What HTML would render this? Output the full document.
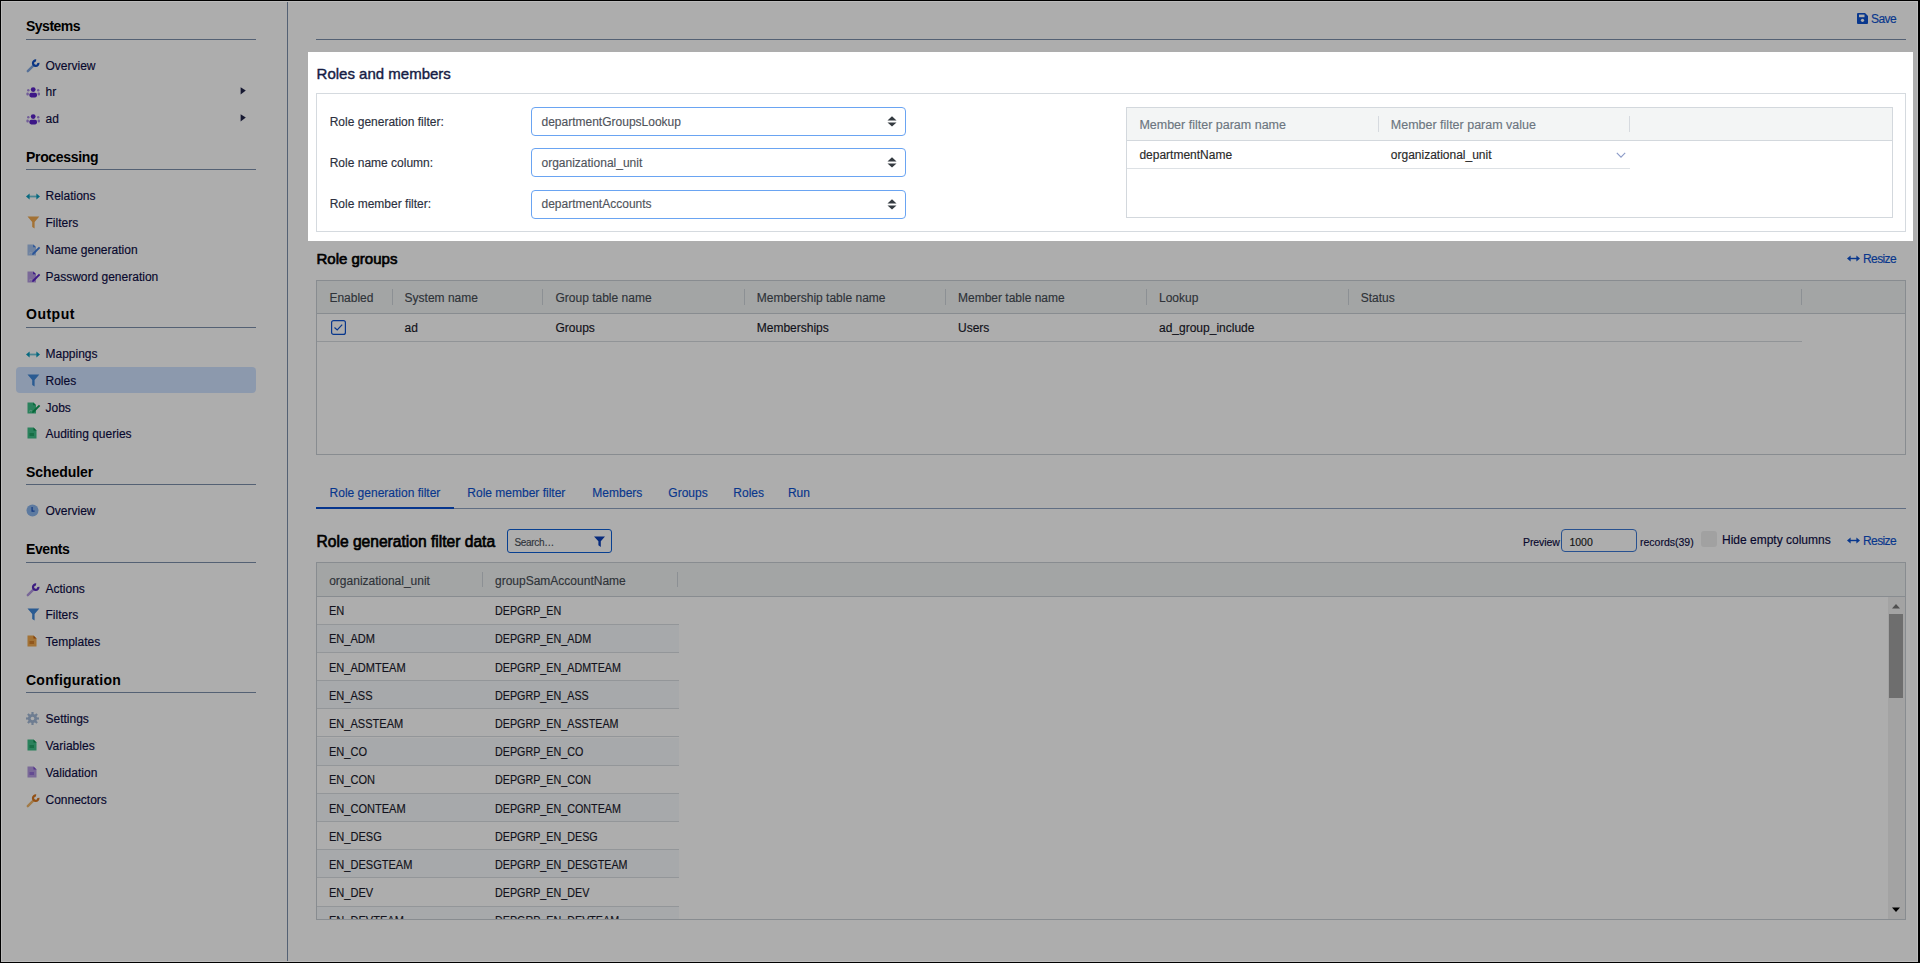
<!DOCTYPE html>
<html><head><meta charset="utf-8"><title>Roles</title>
<style>
html,body{margin:0;padding:0}
body{width:1920px;height:963px;overflow:hidden;position:relative;background:#fff;font-family:"Liberation Sans",sans-serif}
.t{position:absolute;white-space:nowrap;line-height:1;-webkit-text-stroke:0.15px}
.r{position:absolute;display:block}
#ov{position:absolute;left:0;top:0;width:1920px;height:963px;background:rgba(0,0,0,0.32)}
</style></head><body>
<div id="main">
<div class="r" style="left:287px;top:0px;width:1px;height:963px;background:#7d90ab"></div>
<div class="t" style="left:26px;top:19px;font-size:14px;font-weight:700;color:#000;-webkit-text-stroke:0;letter-spacing:-0.5px">Systems</div>
<div class="r" style="left:26px;top:39px;width:230px;height:1px;background:#7d90ab"></div>
<div class="t" style="left:26px;top:150px;font-size:14px;font-weight:700;color:#000;-webkit-text-stroke:0;letter-spacing:-0.33px">Processing</div>
<div class="r" style="left:26px;top:169px;width:230px;height:1px;background:#7d90ab"></div>
<div class="t" style="left:26px;top:307px;font-size:14px;font-weight:700;color:#000;-webkit-text-stroke:0;letter-spacing:0.5px">Output</div>
<div class="r" style="left:26px;top:327px;width:230px;height:1px;background:#7d90ab"></div>
<div class="t" style="left:26px;top:465px;font-size:14px;font-weight:700;color:#000;-webkit-text-stroke:0;letter-spacing:-0.05px">Scheduler</div>
<div class="r" style="left:26px;top:484px;width:230px;height:1px;background:#7d90ab"></div>
<div class="t" style="left:26px;top:542px;font-size:14px;font-weight:700;color:#000;-webkit-text-stroke:0;letter-spacing:-0.4px">Events</div>
<div class="r" style="left:26px;top:562px;width:230px;height:1px;background:#7d90ab"></div>
<div class="t" style="left:26px;top:673px;font-size:14px;font-weight:700;color:#000;-webkit-text-stroke:0;letter-spacing:0.25px">Configuration</div>
<div class="r" style="left:26px;top:692px;width:230px;height:1px;background:#7d90ab"></div>
<div class="r" style="left:16px;top:367px;width:240px;height:26px;background:#cfe2ff;border-radius:4px"></div>
<div class="t" style="left:45.5px;top:60px;font-size:12px;font-weight:400;color:#0c0c44;">Overview</div>
<svg class="r" style="left:26px;top:59px;" width="14" height="14" viewBox="0 0 14 14"><line x1="1.8" y1="12.2" x2="7.6" y2="6.4" stroke="#7fa6e0" stroke-width="2.4" stroke-linecap="round"/><path d="M12.4 3.9 A2.7 2.7 0 1 1 10.1 1.5" stroke="#0f4fc4" stroke-width="2.3" fill="none"/></svg>
<div class="t" style="left:45.5px;top:86px;font-size:12px;font-weight:400;color:#0c0c44;">hr</div>
<svg class="r" style="left:26px;top:87px;" width="15" height="12" viewBox="0 0 15 12"><circle cx="7.2" cy="2.6" r="2.4" fill="#5a22c8"/><rect x="3.4" y="5.8" width="7.6" height="4.6" rx="1.8" fill="#5a22c8"/><circle cx="2.3" cy="3.3" r="1.2" fill="#a88ae0"/><circle cx="12.2" cy="3.3" r="1.2" fill="#a88ae0"/><rect x="0.4" y="5.6" width="2.4" height="3" rx="1" fill="#a88ae0"/><rect x="11.6" y="5.6" width="2.4" height="3" rx="1" fill="#a88ae0"/></svg>
<div class="t" style="left:45.5px;top:113px;font-size:12px;font-weight:400;color:#0c0c44;">ad</div>
<svg class="r" style="left:26px;top:114px;" width="15" height="12" viewBox="0 0 15 12"><circle cx="7.2" cy="2.6" r="2.4" fill="#5a22c8"/><rect x="3.4" y="5.8" width="7.6" height="4.6" rx="1.8" fill="#5a22c8"/><circle cx="2.3" cy="3.3" r="1.2" fill="#a88ae0"/><circle cx="12.2" cy="3.3" r="1.2" fill="#a88ae0"/><rect x="0.4" y="5.6" width="2.4" height="3" rx="1" fill="#a88ae0"/><rect x="11.6" y="5.6" width="2.4" height="3" rx="1" fill="#a88ae0"/></svg>
<div class="t" style="left:45.5px;top:190px;font-size:12px;font-weight:400;color:#0c0c44;">Relations</div>
<svg class="r" style="left:26px;top:193px;" width="14" height="7" viewBox="0 0 14 7"><rect x="3" y="2.6" width="8" height="1.8" fill="#6cc3d8"/><path d="M0 3.5 L3.6 0.6 L3.6 6.4 Z" fill="#0a9bbd"/><path d="M14 3.5 L10.4 0.6 L10.4 6.4 Z" fill="#0a9bbd"/></svg>
<div class="t" style="left:45.5px;top:217px;font-size:12px;font-weight:400;color:#0c0c44;">Filters</div>
<svg class="r" style="left:27px;top:216px;" width="13" height="13" viewBox="0 0 13 13"><path d="M0.5 0.5 H12.3 L7.6 6 V12.6 L5.2 11 V6 Z" fill="#f0a84e"/></svg>
<div class="t" style="left:45.5px;top:244px;font-size:12px;font-weight:400;color:#0c0c44;">Name generation</div>
<svg class="r" style="left:27px;top:244px;" width="14" height="12" viewBox="0 0 14 12"><path d="M0.5 0.5 H6.5 L9 3 V11.5 H0.5 Z" fill="#a6c2ec"/><path d="M2 9.5 Q3.5 7.5 5 9" stroke="#fff" stroke-opacity=".5" fill="none" stroke-width=".8"/><line x1="6" y1="10" x2="12.6" y2="3.4" stroke="#3d7de0" stroke-width="1.9"/><path d="M5 11 L5.6 9.2 L6.8 10.4 Z" fill="#3d7de0"/><path d="M6.2 0.5 L9 3.3 L6.2 3.3 Z" fill="#3d7de0"/></svg>
<div class="t" style="left:45.5px;top:271px;font-size:12px;font-weight:400;color:#0c0c44;">Password generation</div>
<svg class="r" style="left:27px;top:271px;" width="14" height="12" viewBox="0 0 14 12"><path d="M0.5 0.5 H6.5 L9 3 V11.5 H0.5 Z" fill="#b49be0"/><path d="M2 9.5 Q3.5 7.5 5 9" stroke="#fff" stroke-opacity=".5" fill="none" stroke-width=".8"/><line x1="6" y1="10" x2="12.6" y2="3.4" stroke="#5a22c8" stroke-width="1.9"/><path d="M5 11 L5.6 9.2 L6.8 10.4 Z" fill="#5a22c8"/><path d="M6.2 0.5 L9 3.3 L6.2 3.3 Z" fill="#5a22c8"/></svg>
<div class="t" style="left:45.5px;top:348px;font-size:12px;font-weight:400;color:#0c0c44;">Mappings</div>
<svg class="r" style="left:26px;top:351px;" width="14" height="7" viewBox="0 0 14 7"><rect x="3" y="2.6" width="8" height="1.8" fill="#6cc3d8"/><path d="M0 3.5 L3.6 0.6 L3.6 6.4 Z" fill="#0a9bbd"/><path d="M14 3.5 L10.4 0.6 L10.4 6.4 Z" fill="#0a9bbd"/></svg>
<div class="t" style="left:45.5px;top:375px;font-size:12px;font-weight:400;color:#0c0c44;">Roles</div>
<svg class="r" style="left:27px;top:374px;" width="13" height="13" viewBox="0 0 13 13"><path d="M0.5 0.5 H12.3 L7.6 6 V12.6 L5.2 11 V6 Z" fill="#3e86d8"/></svg>
<div class="t" style="left:45.5px;top:402px;font-size:12px;font-weight:400;color:#0c0c44;">Jobs</div>
<svg class="r" style="left:27px;top:402px;" width="14" height="12" viewBox="0 0 14 12"><path d="M0.5 0.5 H6.5 L9 3 V11.5 H0.5 Z" fill="#3fbf88"/><path d="M2 9.5 Q3.5 7.5 5 9" stroke="#fff" stroke-opacity=".5" fill="none" stroke-width=".8"/><line x1="6" y1="10" x2="12.6" y2="3.4" stroke="#0c9a55" stroke-width="1.9"/><path d="M5 11 L5.6 9.2 L6.8 10.4 Z" fill="#0c9a55"/><path d="M6.2 0.5 L9 3.3 L6.2 3.3 Z" fill="#0c9a55"/></svg>
<div class="t" style="left:45.5px;top:428px;font-size:12px;font-weight:400;color:#0c0c44;">Auditing queries</div>
<svg class="r" style="left:27px;top:427px;" width="10" height="12" viewBox="0 0 10 12"><path d="M0.5 0.5 H6.5 L9.5 3.5 V11.5 H0.5 Z" fill="#3fbf88"/><path d="M6.5 0.5 L9.5 3.5 H6.5 Z" fill="#0a8a4a"/><rect x="2.5" y="6" width="4.5" height="3" fill="#0a8a4a" opacity=".55"/></svg>
<div class="t" style="left:45.5px;top:505px;font-size:12px;font-weight:400;color:#0c0c44;">Overview</div>
<svg class="r" style="left:26px;top:504px;" width="13" height="13" viewBox="0 0 13 13"><circle cx="6.5" cy="6.5" r="6" fill="#8ab4ec"/><path d="M6.1 3 V7.2 H8.6" stroke="#1f55c0" stroke-width="1.3" fill="none"/></svg>
<div class="t" style="left:45.5px;top:583px;font-size:12px;font-weight:400;color:#0c0c44;">Actions</div>
<svg class="r" style="left:26px;top:583px;" width="14" height="14" viewBox="0 0 14 14"><line x1="1.8" y1="12.2" x2="7.6" y2="6.4" stroke="#b199e0" stroke-width="2.4" stroke-linecap="round"/><path d="M12.4 3.9 A2.7 2.7 0 1 1 10.1 1.5" stroke="#5b2bbf" stroke-width="2.3" fill="none"/></svg>
<div class="t" style="left:45.5px;top:609px;font-size:12px;font-weight:400;color:#0c0c44;">Filters</div>
<svg class="r" style="left:27px;top:608px;" width="13" height="13" viewBox="0 0 13 13"><path d="M0.5 0.5 H12.3 L7.6 6 V12.6 L5.2 11 V6 Z" fill="#3e86d8"/></svg>
<div class="t" style="left:45.5px;top:636px;font-size:12px;font-weight:400;color:#0c0c44;">Templates</div>
<svg class="r" style="left:27px;top:635px;" width="10" height="12" viewBox="0 0 10 12"><path d="M0.5 0.5 H6.5 L9.5 3.5 V11.5 H0.5 Z" fill="#f0a84e"/><path d="M6.5 0.5 L9.5 3.5 H6.5 Z" fill="#c06010"/><rect x="2.5" y="6" width="4.5" height="3" fill="#c06010" opacity=".55"/></svg>
<div class="t" style="left:45.5px;top:713px;font-size:12px;font-weight:400;color:#0c0c44;">Settings</div>
<svg class="r" style="left:26px;top:712px;" width="13" height="13" viewBox="0 0 13 13"><rect x="5.4" y="0" width="2.2" height="13" fill="#a3b8d6" transform="rotate(0 6.5 6.5)"/><rect x="5.4" y="0" width="2.2" height="13" fill="#a3b8d6" transform="rotate(45 6.5 6.5)"/><rect x="5.4" y="0" width="2.2" height="13" fill="#a3b8d6" transform="rotate(90 6.5 6.5)"/><rect x="5.4" y="0" width="2.2" height="13" fill="#a3b8d6" transform="rotate(135 6.5 6.5)"/><circle cx="6.5" cy="6.5" r="4.6" fill="#a3b8d6"/><circle cx="6.5" cy="6.5" r="1.8" fill="#fff"/></svg>
<div class="t" style="left:45.5px;top:740px;font-size:12px;font-weight:400;color:#0c0c44;">Variables</div>
<svg class="r" style="left:27px;top:739px;" width="10" height="12" viewBox="0 0 10 12"><path d="M0.5 0.5 H6.5 L9.5 3.5 V11.5 H0.5 Z" fill="#3fbf88"/><path d="M6.5 0.5 L9.5 3.5 H6.5 Z" fill="#0a8a4a"/><rect x="2.5" y="6" width="4.5" height="3" fill="#0a8a4a" opacity=".55"/></svg>
<div class="t" style="left:45.5px;top:767px;font-size:12px;font-weight:400;color:#0c0c44;">Validation</div>
<svg class="r" style="left:27px;top:766px;" width="10" height="12" viewBox="0 0 10 12"><path d="M0.5 0.5 H6.5 L9.5 3.5 V11.5 H0.5 Z" fill="#b49be0"/><path d="M6.5 0.5 L9.5 3.5 H6.5 Z" fill="#7a4ad0"/><rect x="2.5" y="6" width="4.5" height="3" fill="#7a4ad0" opacity=".55"/></svg>
<div class="t" style="left:45.5px;top:794px;font-size:12px;font-weight:400;color:#0c0c44;">Connectors</div>
<svg class="r" style="left:26px;top:794px;" width="14" height="14" viewBox="0 0 14 14"><line x1="1.8" y1="12.2" x2="7.6" y2="6.4" stroke="#efb56a" stroke-width="2.4" stroke-linecap="round"/><path d="M12.4 3.9 A2.7 2.7 0 1 1 10.1 1.5" stroke="#d9771f" stroke-width="2.3" fill="none"/></svg>
<svg class="r" style="left:240px;top:87px;" width="7" height="8" viewBox="0 0 7 8"><path d="M0.6 0.2 L5.8 3.6 L0.6 7.4 Z" fill="#22264a"/></svg>
<svg class="r" style="left:240px;top:114px;" width="7" height="8" viewBox="0 0 7 8"><path d="M0.6 0.2 L5.8 3.6 L0.6 7.4 Z" fill="#22264a"/></svg>
<div class="r" style="left:316px;top:39px;width:1590px;height:1px;background:#7d90ab"></div>
<svg class="r" style="left:1857px;top:13px;" width="11" height="11" viewBox="0 0 11 11"><path d="M0 1 Q0 0 1 0 H8 L11 3 V10 Q11 11 10 11 H1 Q0 11 0 10 Z" fill="#0d52d0"/><rect x="2" y="1.6" width="5.5" height="2.6" fill="#fff"/><circle cx="5.5" cy="7.3" r="1.6" fill="#fff"/></svg>
<div class="t" style="left:1871px;top:13px;font-size:12px;font-weight:400;color:#0d52d0;letter-spacing:-0.6px">Save</div>
<div class="t" style="left:316.5px;top:251px;font-size:15px;font-weight:400;color:#000;-webkit-text-stroke:0.65px #000">Role groups</div>
<svg class="r" style="left:1847px;top:255px;" width="13" height="7" viewBox="0 0 13 7"><rect x="2" y="2.8" width="9" height="1.4" fill="#0d52d0"/><path d="M0 3.5 L3.6 0.4 V6.6 Z" fill="#0d52d0"/><path d="M13 3.5 L9.4 0.4 V6.6 Z" fill="#0d52d0"/></svg>
<div class="t" style="left:1863px;top:253px;font-size:12px;font-weight:400;color:#0d52d0;letter-spacing:-0.6px">Resize</div>
<div class="r" style="left:316px;top:280px;width:1590px;height:175px;border:1px solid #c9ced4;box-sizing:border-box"></div>
<div class="r" style="left:317px;top:281px;width:1588px;height:32px;background:#f1f4f3;border-bottom:1px solid #c9ced4"></div>
<div class="t" style="left:329.4px;top:292px;font-size:12px;font-weight:400;color:#464c55;">Enabled</div>
<div class="t" style="left:404.6px;top:292px;font-size:12px;font-weight:400;color:#464c55;">System name</div>
<div class="t" style="left:555.5px;top:292px;font-size:12px;font-weight:400;color:#464c55;">Group table name</div>
<div class="t" style="left:756.75px;top:292px;font-size:12px;font-weight:400;color:#464c55;">Membership table name</div>
<div class="t" style="left:958px;top:292px;font-size:12px;font-weight:400;color:#464c55;">Member table name</div>
<div class="t" style="left:1159px;top:292px;font-size:12px;font-weight:400;color:#464c55;">Lookup</div>
<div class="t" style="left:1360.7px;top:292px;font-size:12px;font-weight:400;color:#464c55;">Status</div>
<div class="r" style="left:392px;top:289px;width:1px;height:16px;background:#cfd4da"></div>
<div class="r" style="left:542px;top:289px;width:1px;height:16px;background:#cfd4da"></div>
<div class="r" style="left:744px;top:289px;width:1px;height:16px;background:#cfd4da"></div>
<div class="r" style="left:945px;top:289px;width:1px;height:16px;background:#cfd4da"></div>
<div class="r" style="left:1146px;top:289px;width:1px;height:16px;background:#cfd4da"></div>
<div class="r" style="left:1348px;top:289px;width:1px;height:16px;background:#cfd4da"></div>
<div class="r" style="left:1801px;top:289px;width:1px;height:16px;background:#cfd4da"></div>
<svg class="r" style="left:331px;top:320px;" width="15" height="15" viewBox="0 0 15 15"><rect x="0.6" y="0.6" width="13.8" height="13.8" rx="2" fill="#fff" stroke="#0d52d0" stroke-width="1.2"/><path d="M3.5 7.5 L6.2 10 L11.2 4.6" stroke="#0d52d0" stroke-width="1.2" fill="none"/></svg>
<div class="t" style="left:404.6px;top:322px;font-size:12px;font-weight:400;color:#1a1a2a;">ad</div>
<div class="t" style="left:555.5px;top:322px;font-size:12px;font-weight:400;color:#1a1a2a;">Groups</div>
<div class="t" style="left:756.75px;top:322px;font-size:12px;font-weight:400;color:#1a1a2a;">Memberships</div>
<div class="t" style="left:958px;top:322px;font-size:12px;font-weight:400;color:#1a1a2a;">Users</div>
<div class="t" style="left:1159px;top:322px;font-size:12px;font-weight:400;color:#1a1a2a;">ad_group_include</div>
<div class="r" style="left:317px;top:341px;width:1485px;height:1px;background:#d6dadf"></div>
<div class="t" style="left:329.6px;top:487px;font-size:12px;font-weight:400;color:#0d52d0;">Role generation filter</div>
<div class="t" style="left:467.3px;top:487px;font-size:12px;font-weight:400;color:#0d52d0;">Role member filter</div>
<div class="t" style="left:592.3px;top:487px;font-size:12px;font-weight:400;color:#0d52d0;">Members</div>
<div class="t" style="left:668.3px;top:487px;font-size:12px;font-weight:400;color:#0d52d0;">Groups</div>
<div class="t" style="left:733.3px;top:487px;font-size:12px;font-weight:400;color:#0d52d0;">Roles</div>
<div class="t" style="left:787.9px;top:487px;font-size:12px;font-weight:400;color:#0d52d0;">Run</div>
<div class="r" style="left:316px;top:508px;width:1590px;height:1px;background:#8fa3c2"></div>
<div class="r" style="left:316px;top:507px;width:138px;height:2px;background:#0a4fd0"></div>
<div class="t" style="left:316.5px;top:534px;font-size:15.6px;font-weight:400;color:#000;-webkit-text-stroke:0.65px #000">Role generation filter data</div>
<div class="r" style="left:507px;top:529px;width:105px;height:24px;border:1.3px solid #0d5fd6;border-radius:3px;box-sizing:border-box;background:#fff"></div>
<div class="t" style="left:514.4px;top:538px;font-size:10px;font-weight:400;color:#4a4f5a;letter-spacing:-0.3px">Search…</div>
<svg class="r" style="left:594px;top:536px;" width="11" height="11" viewBox="0 0 11 11"><path d="M0 0.5 H11 L6.8 5.2 V11 L4.4 9.2 V5.2 Z" fill="#0a3fb8"/></svg>
<div class="t" style="left:1523px;top:537px;font-size:10.5px;font-weight:400;color:#0c0c44;letter-spacing:-0.1px">Preview</div>
<div class="r" style="left:1561px;top:529px;width:76px;height:23px;border:1.3px solid #3b78d4;border-radius:4px;box-sizing:border-box;background:#fff"></div>
<div class="t" style="left:1569.4px;top:537px;font-size:10.5px;font-weight:400;color:#222;">1000</div>
<div class="t" style="left:1640px;top:537px;font-size:10.5px;font-weight:400;color:#0c0c44;">records(39)</div>
<div class="r" style="left:1701px;top:531px;width:16px;height:16px;background:#eeeeee;border-radius:3px"></div>
<div class="t" style="left:1722px;top:534px;font-size:12px;font-weight:400;color:#0c0c44;">Hide empty columns</div>
<svg class="r" style="left:1847px;top:537px;" width="13" height="7" viewBox="0 0 13 7"><rect x="2" y="2.8" width="9" height="1.4" fill="#0d52d0"/><path d="M0 3.5 L3.6 0.4 V6.6 Z" fill="#0d52d0"/><path d="M13 3.5 L9.4 0.4 V6.6 Z" fill="#0d52d0"/></svg>
<div class="t" style="left:1863px;top:535px;font-size:12px;font-weight:400;color:#0d52d0;letter-spacing:-0.6px">Resize</div>
<div class="r" style="left:316px;top:562px;width:1590px;height:358px;border:1px solid #c9ced4;box-sizing:border-box"></div>
<div class="r" style="left:317px;top:563px;width:1588px;height:33px;background:#f1f4f3;border-bottom:1px solid #c9ced4"></div>
<div class="t" style="left:329.2px;top:575px;font-size:12px;font-weight:400;color:#464c55;">organizational_unit</div>
<div class="t" style="left:495px;top:575px;font-size:12px;font-weight:400;color:#464c55;">groupSamAccountName</div>
<div class="r" style="left:482px;top:572px;width:1px;height:15px;background:#cfd4da"></div>
<div class="r" style="left:677px;top:572px;width:1px;height:15px;background:#cfd4da"></div>
<div class="r" style="left:317px;top:597px;width:1571px;height:322px;overflow:hidden">
<div class="r" style="left:0;top:-0.50px;width:362px;height:28.2px;background:#ffffff;border-bottom:1px solid #d9dde2;box-sizing:border-box"></div>
<div class="t" style="left:12px;top:8px;font-size:12px;color:#1a1a2a;transform:scaleX(.92);transform-origin:0 0">EN</div>
<div class="t" style="left:178px;top:8px;font-size:12px;color:#1a1a2a;transform:scaleX(.895);transform-origin:0 0">DEPGRP_EN</div>
<div class="r" style="left:0;top:27.70px;width:362px;height:28.2px;background:#f7f9fc;border-bottom:1px solid #d9dde2;box-sizing:border-box"></div>
<div class="t" style="left:12px;top:36px;font-size:12px;color:#1a1a2a;transform:scaleX(.92);transform-origin:0 0">EN_ADM</div>
<div class="t" style="left:178px;top:36px;font-size:12px;color:#1a1a2a;transform:scaleX(.895);transform-origin:0 0">DEPGRP_EN_ADM</div>
<div class="r" style="left:0;top:55.90px;width:362px;height:28.2px;background:#ffffff;border-bottom:1px solid #d9dde2;box-sizing:border-box"></div>
<div class="t" style="left:12px;top:65px;font-size:12px;color:#1a1a2a;transform:scaleX(.92);transform-origin:0 0">EN_ADMTEAM</div>
<div class="t" style="left:178px;top:65px;font-size:12px;color:#1a1a2a;transform:scaleX(.895);transform-origin:0 0">DEPGRP_EN_ADMTEAM</div>
<div class="r" style="left:0;top:84.10px;width:362px;height:28.2px;background:#f7f9fc;border-bottom:1px solid #d9dde2;box-sizing:border-box"></div>
<div class="t" style="left:12px;top:93px;font-size:12px;color:#1a1a2a;transform:scaleX(.92);transform-origin:0 0">EN_ASS</div>
<div class="t" style="left:178px;top:93px;font-size:12px;color:#1a1a2a;transform:scaleX(.895);transform-origin:0 0">DEPGRP_EN_ASS</div>
<div class="r" style="left:0;top:112.30px;width:362px;height:28.2px;background:#ffffff;border-bottom:1px solid #d9dde2;box-sizing:border-box"></div>
<div class="t" style="left:12px;top:121px;font-size:12px;color:#1a1a2a;transform:scaleX(.92);transform-origin:0 0">EN_ASSTEAM</div>
<div class="t" style="left:178px;top:121px;font-size:12px;color:#1a1a2a;transform:scaleX(.895);transform-origin:0 0">DEPGRP_EN_ASSTEAM</div>
<div class="r" style="left:0;top:140.50px;width:362px;height:28.2px;background:#f7f9fc;border-bottom:1px solid #d9dde2;box-sizing:border-box"></div>
<div class="t" style="left:12px;top:149px;font-size:12px;color:#1a1a2a;transform:scaleX(.92);transform-origin:0 0">EN_CO</div>
<div class="t" style="left:178px;top:149px;font-size:12px;color:#1a1a2a;transform:scaleX(.895);transform-origin:0 0">DEPGRP_EN_CO</div>
<div class="r" style="left:0;top:168.70px;width:362px;height:28.2px;background:#ffffff;border-bottom:1px solid #d9dde2;box-sizing:border-box"></div>
<div class="t" style="left:12px;top:177px;font-size:12px;color:#1a1a2a;transform:scaleX(.92);transform-origin:0 0">EN_CON</div>
<div class="t" style="left:178px;top:177px;font-size:12px;color:#1a1a2a;transform:scaleX(.895);transform-origin:0 0">DEPGRP_EN_CON</div>
<div class="r" style="left:0;top:196.90px;width:362px;height:28.2px;background:#f7f9fc;border-bottom:1px solid #d9dde2;box-sizing:border-box"></div>
<div class="t" style="left:12px;top:206px;font-size:12px;color:#1a1a2a;transform:scaleX(.92);transform-origin:0 0">EN_CONTEAM</div>
<div class="t" style="left:178px;top:206px;font-size:12px;color:#1a1a2a;transform:scaleX(.895);transform-origin:0 0">DEPGRP_EN_CONTEAM</div>
<div class="r" style="left:0;top:225.10px;width:362px;height:28.2px;background:#ffffff;border-bottom:1px solid #d9dde2;box-sizing:border-box"></div>
<div class="t" style="left:12px;top:234px;font-size:12px;color:#1a1a2a;transform:scaleX(.92);transform-origin:0 0">EN_DESG</div>
<div class="t" style="left:178px;top:234px;font-size:12px;color:#1a1a2a;transform:scaleX(.895);transform-origin:0 0">DEPGRP_EN_DESG</div>
<div class="r" style="left:0;top:253.30px;width:362px;height:28.2px;background:#f7f9fc;border-bottom:1px solid #d9dde2;box-sizing:border-box"></div>
<div class="t" style="left:12px;top:262px;font-size:12px;color:#1a1a2a;transform:scaleX(.92);transform-origin:0 0">EN_DESGTEAM</div>
<div class="t" style="left:178px;top:262px;font-size:12px;color:#1a1a2a;transform:scaleX(.895);transform-origin:0 0">DEPGRP_EN_DESGTEAM</div>
<div class="r" style="left:0;top:281.50px;width:362px;height:28.2px;background:#ffffff;border-bottom:1px solid #d9dde2;box-sizing:border-box"></div>
<div class="t" style="left:12px;top:290px;font-size:12px;color:#1a1a2a;transform:scaleX(.92);transform-origin:0 0">EN_DEV</div>
<div class="t" style="left:178px;top:290px;font-size:12px;color:#1a1a2a;transform:scaleX(.895);transform-origin:0 0">DEPGRP_EN_DEV</div>
<div class="r" style="left:0;top:309.70px;width:362px;height:28.2px;background:#f7f9fc;border-bottom:1px solid #d9dde2;box-sizing:border-box"></div>
<div class="t" style="left:12px;top:318px;font-size:12px;color:#1a1a2a;transform:scaleX(.92);transform-origin:0 0">EN_DEVTEAM</div>
<div class="t" style="left:178px;top:318px;font-size:12px;color:#1a1a2a;transform:scaleX(.895);transform-origin:0 0">DEPGRP_EN_DEVTEAM</div>
</div>
<div class="r" style="left:1888px;top:597px;width:17px;height:322px;background:#f1f1f1"></div>
<div class="r" style="left:1889px;top:614px;width:14px;height:84px;background:#a3a3a3"></div>
<svg class="r" style="left:1892px;top:604px;" width="8" height="5" viewBox="0 0 8 5"><path d="M0 4.5 L4 0 L8 4.5 Z" fill="#757575"/></svg>
<svg class="r" style="left:1892px;top:907px;" width="8" height="5" viewBox="0 0 8 5"><path d="M0 0.5 L4 5 L8 0.5 Z" fill="#000"/></svg>
</div>
<div id="ov"></div>
<div id="panel">
<div class="r" style="left:308px;top:52px;width:1605px;height:189px;background:#fff"></div>
<div class="t" style="left:316.6px;top:66px;font-size:15px;font-weight:400;color:#161c44;-webkit-text-stroke:0.4px #161c44">Roles and members</div>
<div class="r" style="left:316px;top:93px;width:1590px;height:139px;border:1px solid #d5dadf;box-sizing:border-box"></div>
<div class="t" style="left:329.7px;top:116px;font-size:12px;font-weight:400;color:#2c3040;">Role generation filter:</div>
<div class="r" style="left:531px;top:107px;width:375px;height:29px;border:1px solid #6aa4f2;border-radius:4px;box-sizing:border-box"></div>
<div class="t" style="left:541.5px;top:116px;font-size:12px;font-weight:400;color:#50545c;">departmentGroupsLookup</div>
<svg class="r" style="left:887px;top:116px;" width="10" height="11" viewBox="0 0 10 11"><path d="M0.5 4.4 L5 0.2 L9.5 4.4 Z" fill="#343a40"/><path d="M0.5 6.4 L5 10.6 L9.5 6.4 Z" fill="#343a40"/></svg>
<div class="t" style="left:329.7px;top:157px;font-size:12px;font-weight:400;color:#2c3040;">Role name column:</div>
<div class="r" style="left:531px;top:148px;width:375px;height:29px;border:1px solid #6aa4f2;border-radius:4px;box-sizing:border-box"></div>
<div class="t" style="left:541.5px;top:157px;font-size:12px;font-weight:400;color:#50545c;">organizational_unit</div>
<svg class="r" style="left:887px;top:157px;" width="10" height="11" viewBox="0 0 10 11"><path d="M0.5 4.4 L5 0.2 L9.5 4.4 Z" fill="#343a40"/><path d="M0.5 6.4 L5 10.6 L9.5 6.4 Z" fill="#343a40"/></svg>
<div class="t" style="left:329.7px;top:198px;font-size:12px;font-weight:400;color:#2c3040;">Role member filter:</div>
<div class="r" style="left:531px;top:190px;width:375px;height:29px;border:1px solid #6aa4f2;border-radius:4px;box-sizing:border-box"></div>
<div class="t" style="left:541.5px;top:198px;font-size:12px;font-weight:400;color:#50545c;">departmentAccounts</div>
<svg class="r" style="left:887px;top:199px;" width="10" height="11" viewBox="0 0 10 11"><path d="M0.5 4.4 L5 0.2 L9.5 4.4 Z" fill="#343a40"/><path d="M0.5 6.4 L5 10.6 L9.5 6.4 Z" fill="#343a40"/></svg>
<div class="r" style="left:1126px;top:107px;width:767px;height:111px;border:1px solid #d3d8dd;box-sizing:border-box"></div>
<div class="r" style="left:1127px;top:108px;width:765px;height:32px;background:#f3f5f5;border-bottom:1px solid #d3d8dd"></div>
<div class="t" style="left:1139.4px;top:119px;font-size:12.5px;font-weight:400;color:#6c7580;">Member filter param name</div>
<div class="t" style="left:1390.8px;top:119px;font-size:12.5px;font-weight:400;color:#6c7580;">Member filter param value</div>
<div class="r" style="left:1378px;top:116px;width:1px;height:16px;background:#d6dadf"></div>
<div class="r" style="left:1629px;top:116px;width:1px;height:16px;background:#d6dadf"></div>
<div class="t" style="left:1139.4px;top:149px;font-size:12px;font-weight:400;color:#2a2a2a;">departmentName</div>
<div class="t" style="left:1390.8px;top:149px;font-size:12px;font-weight:400;color:#2a2a2a;">organizational_unit</div>
<svg class="r" style="left:1616px;top:152px;" width="10" height="7" viewBox="0 0 10 7"><path d="M0.8 0.8 L5 5.2 L9.2 0.8" stroke="#8c9bc8" stroke-width="1.1" fill="none"/></svg>
<div class="r" style="left:1127px;top:168px;width:503px;height:1px;background:#dde1e5"></div>
</div>
<div class="r" style="left:0;top:0;width:1920px;height:1px;background:#000"></div>
<div class="r" style="left:0;top:962px;width:1920px;height:1px;background:#000"></div>
<div class="r" style="left:0;top:0;width:1px;height:963px;background:#000"></div>
<div class="r" style="left:1918px;top:0;width:2px;height:963px;background:#000"></div>
<div class="r" style="left:1px;top:1px;width:1917px;height:1px;background:#bcbcbc"></div>
<div class="r" style="left:1px;top:961px;width:1917px;height:1px;background:#bcbcbc"></div>
<div class="r" style="left:1px;top:1px;width:1px;height:961px;background:#bcbcbc"></div>
<div class="r" style="left:1917px;top:1px;width:1px;height:961px;background:#bcbcbc"></div>
</body></html>
